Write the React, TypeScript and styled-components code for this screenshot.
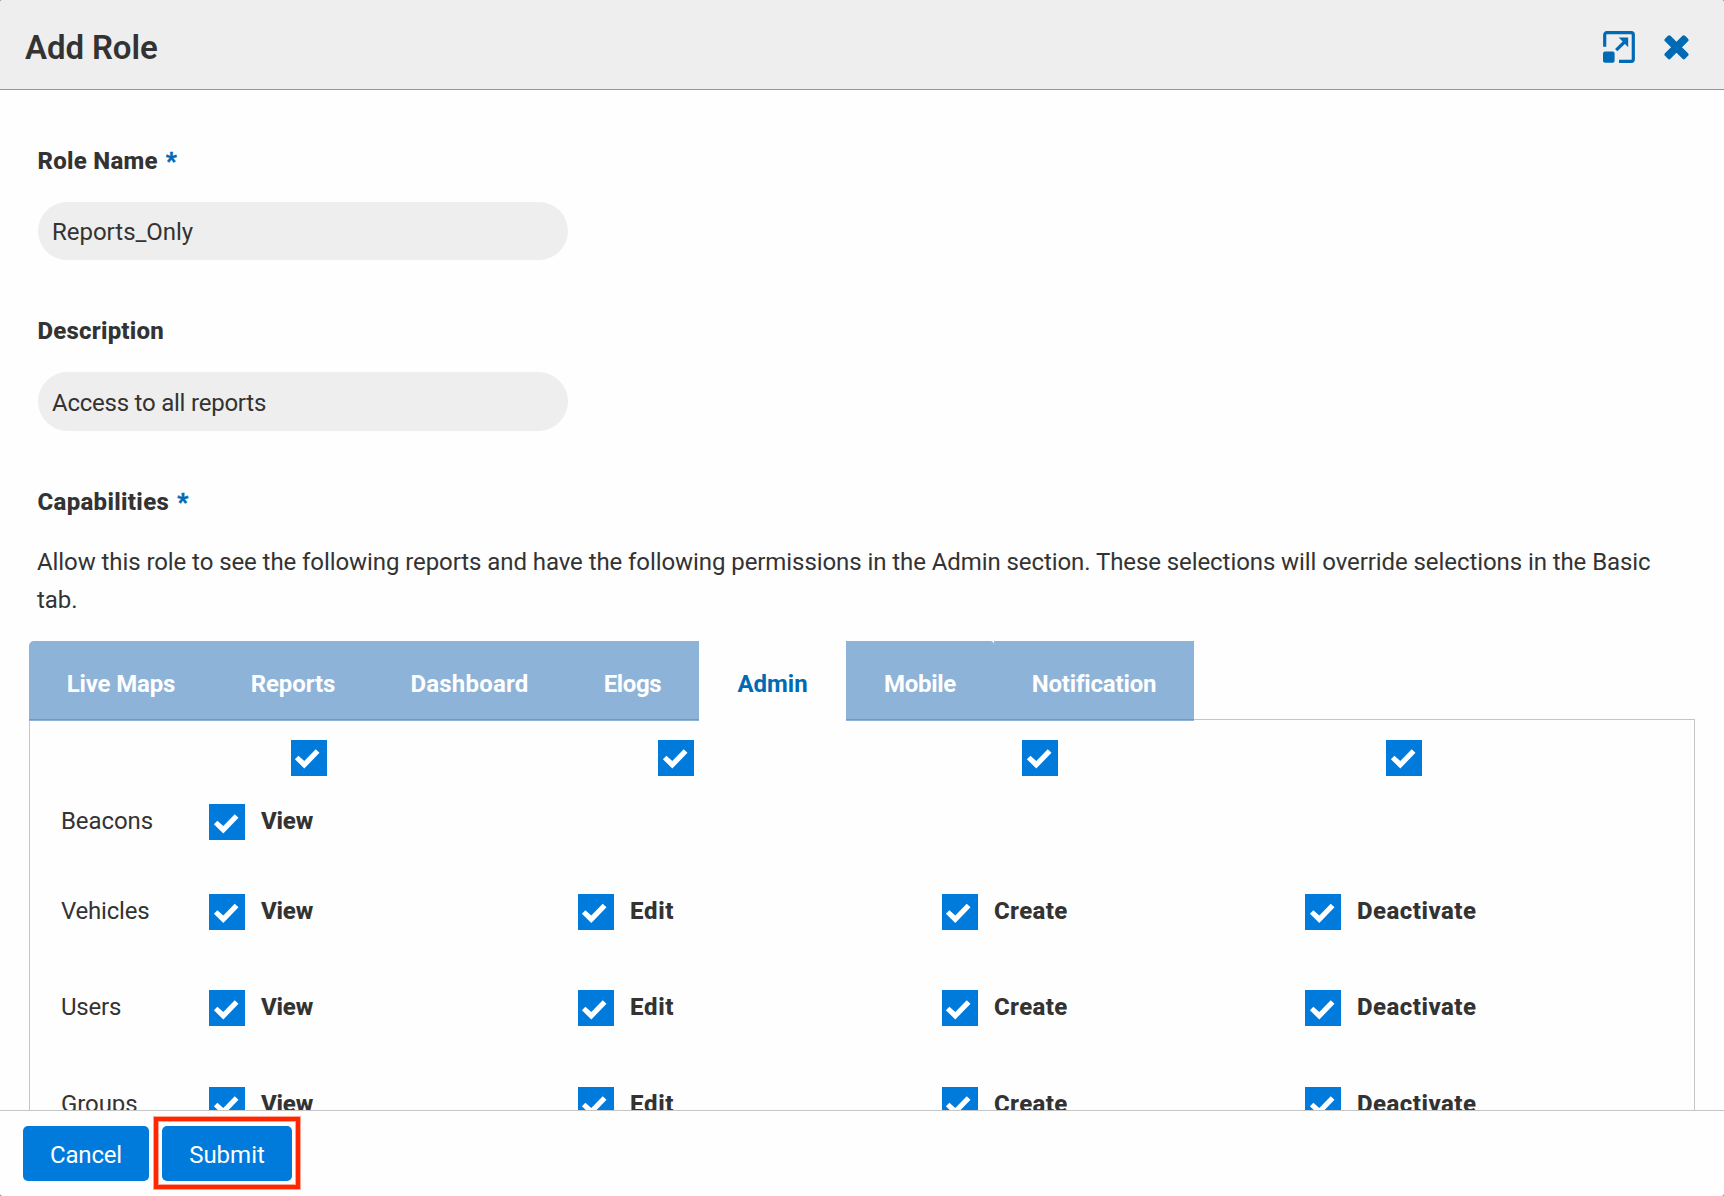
import React from 'react';
import styled, { createGlobalStyle } from 'styled-components';

const GlobalStyle = createGlobalStyle`
  *, *::before, *::after { box-sizing: border-box; }
  html, body { margin: 0; padding: 0; background: #999; }
  body { overflow: hidden; }
`;

const Dialog = styled.div`
  display: flex;
  flex-direction: column;
  width: 1724px;
  height: 1196px;
  overflow: hidden;
  border-radius: 3px;
  background: #fefefe;
  color: #333;
  font: 400 24px/38px Roboto, "Liberation Sans", sans-serif;
`;

const Header = styled.header`
  flex: none;
  display: flex;
  justify-content: space-between;
  height: 90px;
  padding: 31px 35px 0 25px;
  background: #eee;
  border-bottom: 1px solid #949494;
`;

const Title = styled.h1`
  margin: -3px 0 0;
  font-size: 33px;
  font-weight: 600;
  line-height: 39px;
  letter-spacing: -0.1px;
`;

const HeaderActions = styled.div`
  display: flex;
  gap: 29px;
  color: #006ab5;
`;

const Body = styled.main`
  flex: 1;
  min-height: 0;
  overflow: hidden;
  padding: 52px 29px 0;
`;

const Track = styled.span<{ $ls?: number }>`
  letter-spacing: ${({ $ls = 0 }) => $ls}px;
`;

const Label = styled.div`
  display: flex;
  gap: 8px;
  margin-left: 8.5px;
  font-weight: 800;
`;

const Required = styled.span`
  color: #006ab5;
  -webkit-text-stroke: 0.5px #006ab5;
`;

const TextField = styled.div<{ $height: number }>`
  display: flex;
  align-items: center;
  width: 530px;
  height: ${({ $height }) => $height}px;
  margin: 22px 0 52px 9px;
  padding: 2px 14px 0;
  border-radius: 30px;
  background: #eee;
`;

const Help = styled.p`
  width: 1640px;
  margin: 22px 0 22px 8px;
  letter-spacing: -0.078px;
`;

const Tabs = styled.nav`
  position: relative;
  display: flex;
  height: 80px;
  margin-bottom: -2px;
`;

const Tab = styled.div<{ $width: number; $active?: boolean }>`
  display: flex;
  align-items: center;
  justify-content: center;
  width: ${({ $width }) => $width}px;
  padding-top: 5px;
  font-weight: 700;
  color: ${({ $active }) => ($active ? '#006ab5' : '#fefefe')};
  background: ${({ $active }) =>
    $active
      ? '#fefefe'
      : 'linear-gradient(#7299c2, #7299c2) 0 78px / 100% 1px no-repeat #8eb3d8'};
  &:first-child { border-top-left-radius: 5px; }
  &:nth-last-child(2) { border-top-right-radius: 4px; }
`;

const Panel = styled.section`
  width: 1666px;
  height: 500px;
  padding-top: 20px;
  border: 1px solid #c6c6c6;
`;

const ToggleRow = styled.div`
  display: grid;
  grid-template-columns: 367px 364px 364px 1fr;
  height: 64px;
  padding-left: 261px;
`;

const PermissionRow = styled.div<{ $height: number }>`
  display: grid;
  grid-template-columns: 179px 369px 364px 363px 1fr;
  height: ${({ $height }) => $height}px;
  line-height: 34px;
`;

const RowName = styled.div`
  padding-left: 31px;
`;

const Permission = styled.div`
  display: flex;
  align-items: flex-start;
  gap: 16px;
  font-weight: 800;
`;

const Box = styled.span`
  flex: none;
  width: 36px;
  height: 36px;
  background: #007bdc;
  svg { display: block; }
`;

const Footer = styled.footer`
  flex: none;
  display: flex;
  gap: 13px;
  height: 86px;
  padding: 15px 23px 0;
  border-top: 1px solid #c6c6c6;
`;

const Button = styled.button<{ $width: number }>`
  width: ${({ $width }) => $width}px;
  height: 55px;
  padding: 3px 0 0;
  border: 0;
  border-radius: 5px;
  background: #007bdc;
  color: #fff;
  font: 450 24px/38px Roboto, "Liberation Sans", sans-serif;
`;

const Highlighted = styled.div`
  position: relative;
  height: 55px;
  &::after {
    content: '';
    position: absolute;
    inset: -9px -8px -8px;
    border: 4px solid #ff2600;
    box-shadow: 0 0 0 1px rgba(255, 38, 0, 0.4), inset 0 0 0 1px rgba(255, 38, 0, 0.4);
  }
`;

function ExpandIcon() {
  return (
    <svg width="32" height="32" viewBox="0 0 32 32" fill="none">
      <path
        d="M1.7 15.7V3.7a2 2 0 0 1 2-2h24.6a2 2 0 0 1 2 2v24.6a2 2 0 0 1-2 2H16"
        stroke="currentColor"
        strokeWidth="3.2"
      />
      <rect x="0" y="20.6" width="11.6" height="11.2" rx="2" fill="currentColor" />
      <path d="M13.2 19.2 21.5 11" stroke="currentColor" strokeWidth="3.2" />
      <path d="M15.7 6.6H25.2V16.2Z" fill="currentColor" />
    </svg>
  );
}

function CloseIcon() {
  return (
    <svg width="25" height="32" viewBox="0 0 25 32">
      <g transform="translate(12.5 16.3)" fill="currentColor">
        <rect x="-14.2" y="-3.9" width="28.4" height="7.8" rx="1.8" transform="rotate(45)" />
        <rect x="-14.2" y="-3.9" width="28.4" height="7.8" rx="1.8" transform="rotate(-45)" />
      </g>
    </svg>
  );
}

function Checkbox({ dx = 0, dy = 0 }: { dx?: number; dy?: number }) {
  return (
    <Box role="checkbox" aria-checked="true">
      <svg width="36" height="36" viewBox="0 0 36 36">
        <path
          transform={`translate(${dx} ${dy})`}
          d="M3.9 19.2 7.4 15.8 13.3 20.9 24.7 9.3 28.5 12.8 13.3 28.5Z"
          fill="#fff"
        />
      </svg>
    </Box>
  );
}

const tabs = [
  { name: 'Live Maps', width: 184, ls: -0.17 },
  { name: 'Reports', width: 160, ls: -0.08 },
  { name: 'Dashboard', width: 193, ls: 0.2 },
  { name: 'Elogs', width: 133, ls: -0.37 },
  { name: 'Admin', width: 147, ls: 0, active: true },
  { name: 'Mobile', width: 148, ls: -0.3 },
  { name: 'Notification', width: 200, ls: -0.18 },
];

const view = { name: 'View', ls: -0.2, toggleDx: 0, dx: 1 };
const all = [
  view,
  { name: 'Edit', ls: 0.7, toggleDx: 1, dx: 0 },
  { name: 'Create', ls: 0.36, toggleDx: 1, dx: 0 },
  { name: 'Deactivate', ls: 0.48, toggleDx: 1, dx: 1 },
];

const rows = [
  { name: 'Beacons', ls: -0.1, height: 90, dy: 1, permissions: [view] },
  { name: 'Vehicles', ls: -0.2, height: 96, dy: 0.5, permissions: all },
  { name: 'Users', ls: -0.2, height: 97, dy: 1, permissions: all },
  { name: 'Groups', ls: -0.1, height: 96, dy: 0, permissions: all },
];

export default function App() {
  return (
    <>
      <GlobalStyle />
      <Dialog>
        <Header>
          <Title>Add Role</Title>
          <HeaderActions>
            <ExpandIcon />
            <CloseIcon />
          </HeaderActions>
        </Header>
        <Body>
          <Label>
            <Track $ls={0.26}>Role Name</Track>
            <Required>*</Required>
          </Label>
          <TextField $height={58}>
            <Track $ls={-0.02}>Reports_Only</Track>
          </TextField>
          <Label>
            <Track $ls={0.22}>Description</Track>
          </Label>
          <TextField $height={59}>
            <Track $ls={-0.23}>Access to all reports</Track>
          </TextField>
          <Label>
            <Track $ls={0.32}>Capabilities</Track>
            <Required>*</Required>
          </Label>
          <Help>
            Allow this role to see the following reports and have the following permissions in the
            Admin section. These selections will override selections in the Basic tab.
          </Help>
          <Tabs>
            {tabs.map((t) => (
              <Tab key={t.name} $width={t.width} $active={t.active}>
                <Track $ls={t.ls}>{t.name}</Track>
              </Tab>
            ))}
          </Tabs>
          <Panel>
            <ToggleRow>
              {all.map((p) => (
                <Checkbox key={p.name} dx={p.toggleDx} />
              ))}
            </ToggleRow>
            {rows.map((row) => (
              <PermissionRow key={row.name} $height={row.height}>
                <RowName>
                  <Track $ls={row.ls}>{row.name}</Track>
                </RowName>
                {row.permissions.map((p) => (
                  <Permission key={p.name}>
                    <Checkbox dx={p.dx} dy={row.dy} />
                    <Track $ls={p.ls}>{p.name}</Track>
                  </Permission>
                ))}
              </PermissionRow>
            ))}
          </Panel>
        </Body>
        <Footer>
          <Button $width={126}>
            <Track $ls={-0.2}>Cancel</Track>
          </Button>
          <Highlighted>
            <Button $width={130}>Submit</Button>
          </Highlighted>
        </Footer>
      </Dialog>
    </>
  );
}
